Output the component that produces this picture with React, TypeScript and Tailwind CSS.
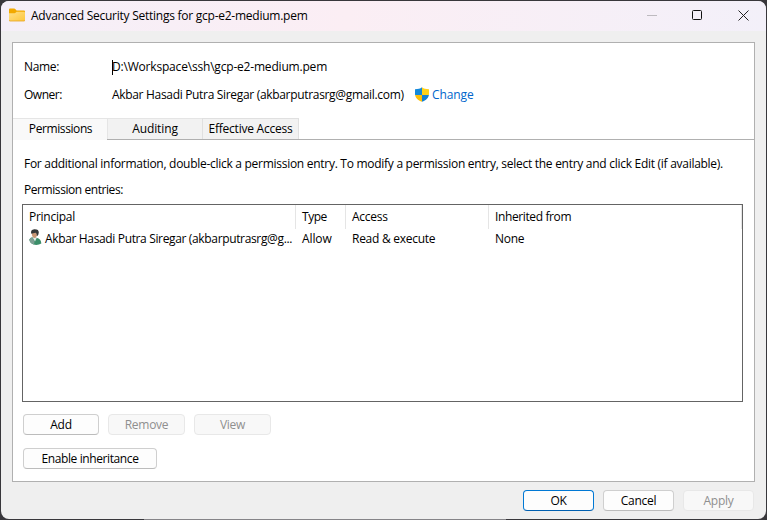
import React from "react";

function FolderIcon() {
  return (
    <svg width="16" height="14" viewBox="0 0 16 14" className="-mt-[2px] block shrink-0">
      <defs>
        <linearGradient id="folder" x1="0" y1="0" x2="1" y2="1">
          <stop offset="0" stopColor="#ffe08a" />
          <stop offset="1" stopColor="#fdc73c" />
        </linearGradient>
      </defs>
      <path d="M0 1.5Q0 .5 1 .5h4.300q.5 0 .9.4L7.600 2.500H15q1 0 1 1V7H0z" fill="#f2a900" />
      <path d="M0 5.200h5.600q.5 0 .9-.4l1.100-1.100H15q1 0 1 1V12q0 1-1 1H1q-1 0-1-1z" fill="url(#folder)" />
      <path d="M0 12q0 1 1 1h14q1 0 1-1" fill="none" stroke="#e8a51c" strokeWidth=".8" />
    </svg>
  );
}

function ShieldIcon() {
  return (
    <svg width="14" height="15" viewBox="0 0 14 15" className="-mt-px block shrink-0">
      <defs>
        <clipPath id="shield">
          <path d="M7 .3C8.700 1.700 11 2.200 14 2.300V7c0 3.600-3 6.400-7 7.800C3 13.400 0 10.600 0 7V2.300C3 2.200 5.300 1.700 7 .3z" />
        </clipPath>
      </defs>
      <g clipPath="url(#shield)">
        <rect width="7" height="8" fill="#1489db" />
        <rect x="7" width="7" height="8" fill="#ffd21a" />
        <rect y="8" width="7" height="7" fill="#fdbf0a" />
        <rect x="7" y="8" width="7" height="7" fill="#1581d4" />
      </g>
    </svg>
  );
}

function UserIcon() {
  return (
    <svg width="13" height="16" viewBox="0 0 13 16" className="block shrink-0">
      <path d="M.3 10.500Q1.500 8.300 4 8.300l3.500.4Q12.300 10 12.300 14.500 9 16.600 4.500 15.600 1 14.500.3 10.500z" fill="#3b8e69" />
      <path d="M.3 10.500q1-2 3.200-2.200L5.500 13l-.5 2.500Q1 14.500.3 10.500z" fill="#7d9d92" />
      <path d="M3.500 8.200 6 12.500l1.800-3.700z" fill="#e4ebe7" />
      <path d="M3 3.500h4.900v3.200q-.8 2.400-2.500 2.300Q3.300 8.500 2.900 6z" fill="#c99775" />
      <path d="M2.200 4.800Q1.200.6 5.300.2q4.600-.2 4.500 3.400Q9.700 6.400 7.900 7.200 8 4.300 6.500 3.800 4 4.200 2.200 4.800z" fill="#343737" />
    </svg>
  );
}

function Button({ className, children, disabled = false }: { className: string; children: React.ReactNode; disabled?: boolean }) {
  const tone = disabled
    ? "border-[#e8e8e8] bg-[#f8f8f8] text-[#8f8f8f]"
    : "border-[#cfcfcf] border-b-[#bcbcbc] bg-[#fdfdfd]";
  return (
    <button disabled={disabled} className={`flex h-[21px] items-center justify-center rounded-[4px] border pt-px ${tone} ${className}`}>
      {children}
    </button>
  );
}

export default function App() {
  return (
    <div className="h-[520px] w-[767px] overflow-hidden bg-[#38373b] pt-px pl-px font-['Open_Sans','Noto_Sans',sans-serif] text-[12px] leading-[16px] whitespace-nowrap text-black">
      <div className="flex h-[518px] w-[765px] flex-col overflow-hidden rounded-[8px] bg-[#efefef]">
        <header className="flex h-[30px] shrink-0 items-center bg-linear-to-r from-[#f5eff8] via-[#fbeef4] via-45% to-[#f3f0f9] pl-2">
          <FolderIcon />
          <span className="ml-[6px] tracking-[-0.25px]">Advanced Security Settings for gcp-e2-medium.pem</span>
          <svg width="104" height="12" viewBox="0 0 104 12" className="-mt-[2px] mr-[16px] ml-auto block" fill="none">
            <path d="M1 6.500h10" stroke="#bdbabf" />
            <rect x="46.500" y="1.500" width="9" height="9" rx="1" stroke="#111" />
            <path d="m92.500 1.500 10 10m0-10-10 10" stroke="#222" />
          </svg>
        </header>
        <main className="mt-[11px] ml-[11px] flex h-[440px] w-[743px] shrink-0 flex-col border border-[#b0b0b0] bg-white">
          <div className="mt-[16px] flex h-4 items-center pl-[11px]">
            <span className="w-[88px] tracking-[-0.35px]">Name:</span>
            <span className="h-[15px] w-px bg-black" />
            <span className="-ml-px tracking-[-0.19px]">D:\Workspace\ssh\gcp-e2-medium.pem</span>
          </div>
          <div className="mt-[12px] flex h-4 items-center pl-[11px]">
            <span className="w-[88px] tracking-[-0.5px]">Owner:</span>
            <span className="w-[303px] tracking-[-0.32px]">Akbar Hasadi Putra Siregar (akbarputrasrg@gmail.com)</span>
            <ShieldIcon />
            <span className="ml-[3px] tracking-[-0.1px] text-[#0066cc]">Change</span>
          </div>
          <nav className="mt-[15px] flex h-[22px] shrink-0 border-b border-[#b0b0b0] text-center leading-[20px]">
            <div className="-mb-px h-[22px] w-[94px] border-t border-[#e5e5e5] bg-[#f9f9f9] pl-px tracking-[-0.4px]">Permissions</div>
            <div className="w-[95px] border-t border-l border-[#e5e5e5] bg-[#f2f2f2] tracking-[-0.1px]">Auditing</div>
            <div className="w-[97px] border-x border-t border-[#e0e0e0] bg-[#f2f2f2] tracking-[-0.24px]">Effective Access</div>
          </nav>
          <p className="mt-[16px] ml-[11px] h-4 tracking-[-0.28px]">For additional information, double-click a permission entry. To modify a permission entry, select the entry and click Edit (if available).</p>
          <p className="mt-[10px] ml-[11px] h-4 tracking-[-0.43px]">Permission entries:</p>
          <section className="mt-[6px] ml-[9px] h-[198px] w-[721px] shrink-0 border border-[#646464] tracking-[-0.27px]">
            <div className="flex h-[24px] leading-[24px]">
              <div className="w-[273px] border-r border-[#e5e5e5] pl-[6px]">Principal</div>
              <div className="w-[50px] border-r border-[#e5e5e5] pl-[6px] tracking-[-0.45px]">Type</div>
              <div className="w-[143px] border-r border-[#e5e5e5] pl-[6px]">Access</div>
              <div className="w-[253px] border-r border-[#e5e5e5] pl-[6px] tracking-[-0.38px]">Inherited from</div>
            </div>
            <div className="flex h-[20px] leading-[20px]">
              <div className="flex w-[273px] pl-[6px]">
                <UserIcon />
                <span className="ml-[3px] tracking-[-0.35px]">Akbar Hasadi Putra Siregar (akbarputrasrg@g...</span>
              </div>
              <div className="w-[50px] pl-[6px] tracking-[-0.1px]">Allow</div>
              <div className="w-[143px] pl-[6px]">Read &amp; execute</div>
              <div className="pl-[6px]">None</div>
            </div>
          </section>
          <div className="mt-[12px] ml-[10px] flex gap-[9px] tracking-[-0.27px]">
            <Button className="w-[76px]">Add</Button>
            <Button className="w-[77px]" disabled>Remove</Button>
            <Button className="w-[77px]" disabled>View</Button>
          </div>
          <Button className="mt-[13px] ml-[10px] w-[134px] tracking-[-0.4px]">Enable inheritance</Button>
        </main>
        <footer className="mt-[8px] mr-[12px] flex justify-end gap-[9px] tracking-[-0.27px]">
          <Button className="w-[71px] border-[#0078d4]! border-b-[#005fb0]!">OK</Button>
          <Button className="w-[71px]">Cancel</Button>
          <Button className="w-[71px]" disabled>Apply</Button>
        </footer>
      </div>
      <div className="ml-[143px] h-px w-[362px] bg-[#858488]" />
    </div>
  );
}
